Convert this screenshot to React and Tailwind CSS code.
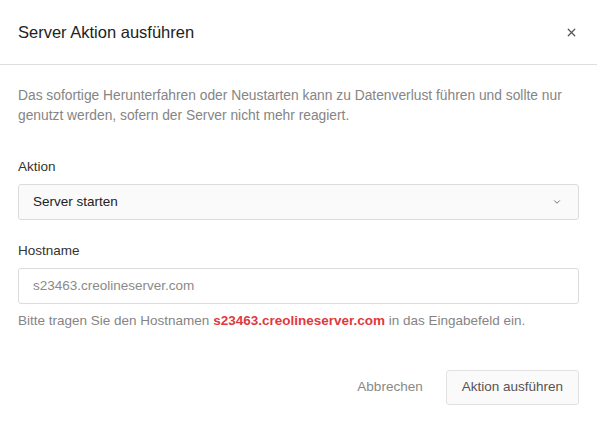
import { ChevronDown, X } from 'lucide-react';

export default function App() {
  return (
    <div className="w-[597px] h-[423px] bg-white text-[#333] font-['Liberation_Sans',Arial,sans-serif]">
      <div className="flex items-center justify-between h-[65px] pl-[18px] pr-[19px] border-b border-[#dedede]">
        <h1 className="text-[16.5px] text-[#222] pt-[1px]">Server Aktion ausführen</h1>
        <X className="w-[13px] h-[13px] text-[#555]" strokeWidth={2.3} />
      </div>

      <div className="px-[18px] pt-[21px]">
        <p className="text-[13.8px] leading-[20px] text-[#858585]">
          Das sofortige Herunterfahren oder Neustarten kann zu Datenverlust führen und sollte nur genutzt werden, sofern der Server nicht mehr reagiert.
        </p>

        <label className="block mt-[32px] text-[13.5px] leading-[18px] text-[#333]">Aktion</label>
        <div className="mt-[8px] h-[36px] flex items-center justify-between border border-[#dcdcdc] rounded-[3px] pl-[14px] pr-[16px] bg-[#fafafa]">
          <span className="text-[13.5px] text-[#222]">Server starten</span>
          <ChevronDown className="w-[10px] h-[10px] text-[#666]" strokeWidth={2.2} />
        </div>

        <label className="block mt-[22px] text-[13.5px] leading-[18px] text-[#333]">Hostname</label>
        <div className="mt-[8px] h-[36px] flex items-center border border-[#dcdcdc] rounded-[3px] px-[14px]">
          <span className="text-[13.5px] text-[#8a8a8a]">s23463.creolineserver.com</span>
        </div>
        <p className="mt-[8px] text-[13.5px] leading-[18px] text-[#858585]">
          Bitte tragen Sie den Hostnamen <span className="text-[#e0393e] font-semibold">s23463.creolineserver.com</span> in das Eingabefeld ein.
        </p>

        <div className="flex justify-end items-center mt-[40px] gap-[23px]">
          <button className="text-[13.5px] text-[#888]">Abbrechen</button>
          <button className="h-[35px] px-[15px] text-[13.5px] text-[#555] border border-[#e2e2e2] rounded-[3px] bg-[#fafafa]">Aktion ausführen</button>
        </div>
      </div>
    </div>
  );
}
